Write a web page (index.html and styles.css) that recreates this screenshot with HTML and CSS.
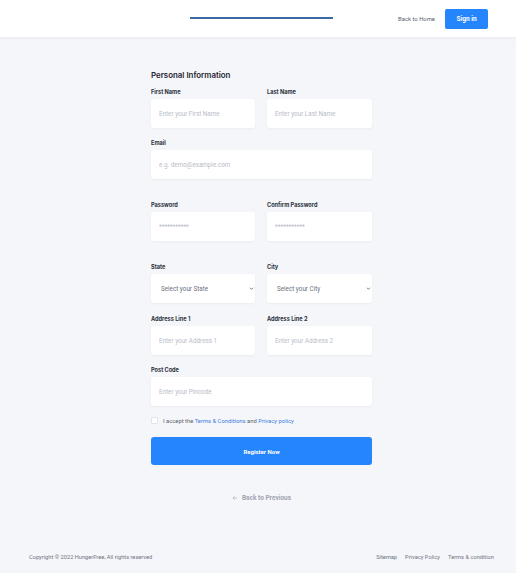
FILE: index.html
```html
<!DOCTYPE html>
<html lang="en">
<head>
<meta charset="utf-8">
<title>Register</title>
<link rel="stylesheet" href="styles.css">
</head>
<body>
<header class="topbar">
  <div class="progress"></div>
  <nav class="topnav">
    <a class="home-link" href="#">Back to Home</a>
    <a class="signin" href="#">Sign in</a>
  </nav>
</header>

<main class="form-wrap">
  <h2 class="title">Personal Information</h2>
  <form class="form">
    <div class="row two">
      <div class="field"><label>First Name</label><input class="input" placeholder="Enter your First Name"></div>
      <div class="field"><label>Last Name</label><input class="input" placeholder="Enter your Last Name"></div>
    </div>
    <div class="row spaced">
      <div class="field"><label>Email</label><input class="input" placeholder="e.g. demo@example.com"></div>
    </div>
    <div class="row two spaced">
      <div class="field"><label>Password</label><input class="input" type="password" placeholder="***********"></div>
      <div class="field"><label>Confirm Password</label><input class="input" type="password" placeholder="***********"></div>
    </div>
    <div class="row two mid">
      <div class="field"><label>State</label>
        <div class="select">Select your State
          <svg class="chev" viewBox="0 0 10 10" width="5" height="5"><path d="M2 3.5 L5 6.5 L8 3.5" fill="none" stroke="#444" stroke-width="1.4"/></svg>
        </div>
      </div>
      <div class="field"><label>City</label>
        <div class="select">Select your City
          <svg class="chev" viewBox="0 0 10 10" width="5" height="5"><path d="M2 3.5 L5 6.5 L8 3.5" fill="none" stroke="#444" stroke-width="1.4"/></svg>
        </div>
      </div>
    </div>
    <div class="row two">
      <div class="field"><label>Address Line 1</label><input class="input" placeholder="Enter your Address 1"></div>
      <div class="field"><label>Address Line 2</label><input class="input" placeholder="Enter your Address 2"></div>
    </div>
    <div class="row">
      <div class="field"><label>Post Code</label><input class="input" placeholder="Enter your Pincode"></div>
    </div>
    <div class="agree">
      <span class="check"></span>
      <span>I accept the <a href="#">Terms &amp; Conditions</a> and <a href="#">Privacy policy</a></span>
    </div>
    <button class="register" type="button">Register Now</button>
  </form>
  <a class="back" href="#">
    <svg viewBox="0 0 10 10" width="6" height="6"><path d="M8.5 5 H1.8 M4.5 2.2 L1.6 5 L4.5 7.8" fill="none" stroke="#a3a8b4" stroke-width="1.1"/></svg>
    Back to Previous
  </a>
</main>

<footer class="footer">
  <span>Copyright © 2022 HungerFree, All rights reserved</span>
  <nav class="footlinks">
    <a href="#">Sitemap</a>
    <a href="#">Privacy Policy</a>
    <a href="#">Terms &amp; condition</a>
  </nav>
</footer>
</body>
</html>
```
FILE: styles.css
```css
* { box-sizing: border-box; }
html, body { margin: 0; padding: 0; }
body {
  background: #f5f6fa;
  font-family: Roboto, "Liberation Sans", sans-serif;
  color: #2a2f3a;
  width: 516px;
  min-height: 573px;
}
a { text-decoration: none; }

.topbar {
  height: 37px;
  background: #fff;
  box-shadow: 0 1px 4px rgba(30, 40, 70, 0.06);
  display: flex;
  align-items: center;
  padding: 0 28px 0 190px;
}
.progress {
  width: 143px;
  height: 2px;
  background: #3a6aa6;
  margin-top: -1px;
}
.topnav {
  margin-left: auto;
  display: flex;
  align-items: center;
  gap: 10px;
}
.home-link {
  font-size: 5.9px;
  color: #5b6170;
}
.signin {
  width: 43px;
  height: 20px;
  background: #2585fc;
  color: #fff;
  font-weight: 700;
  font-size: 6.5px;
  border-radius: 2px;
  display: flex;
  align-items: center;
  justify-content: center;
}

.form-wrap {
  width: 221px;
  margin-left: 151px;
  padding-top: 33px;
}
.title {
  font-family: Inter, Roboto, sans-serif;
  font-size: 7.9px;
  line-height: 10px;
  font-weight: 600;
  margin: 0 0 8px;
  color: #1f2431;
}
.form { display: flex; flex-direction: column; }
.row { margin-bottom: 11px; }
.row.spaced { margin-bottom: 22px; }
.row.mid { margin-bottom: 12px; }
.row.two {
  display: grid;
  grid-template-columns: 104px 105px;
  column-gap: 12px;
}
.field label {
  display: block;
  font-family: Inter, Roboto, sans-serif;
  font-size: 5.6px;
  line-height: 8px;
  font-weight: 700;
  color: #2b303b;
  margin-bottom: 3px;
}
.input, .select {
  display: block;
  width: 100%;
  height: 29px;
  background: #fff;
  border: none;
  border-radius: 3px;
  box-shadow: 0 1px 3px rgba(40, 50, 80, 0.05);
  font-family: Roboto, sans-serif;
  font-size: 6.3px;
  padding: 0 8px;
  outline: none;
}
.input::placeholder { color: #b8bcc7; }
.select {
  display: flex;
  align-items: center;
  justify-content: space-between;
  padding: 0 1px 0 10px;
  color: #6a7080;
}
.chev { display: block; }

.agree {
  display: flex;
  align-items: center;
  gap: 5px;
  font-size: 5.85px;
  color: #5a5f6b;
  margin-top: -1px;
  height: 9px;
}
.agree a { color: #3b7ee0; }
.check {
  width: 7px;
  height: 7px;
  background: #fff;
  border: 0.5px solid #e2e4ea;
  border-radius: 1px;
}
.register {
  margin-top: 12px;
  height: 28px;
  width: 100%;
  background: #2585fc;
  border: none;
  border-radius: 3px;
  color: #fff;
  font-family: Roboto, sans-serif;
  font-size: 6px;
  font-weight: 700;
}
.back {
  margin: 29px auto 0;
  display: flex;
  align-items: center;
  justify-content: center;
  gap: 4px;
  color: #a0a5b1;
  font-size: 6.5px;
  font-weight: 700;
}
.back svg { display: block; }

.footer {
  margin-top: 52px;
  display: flex;
  justify-content: space-between;
  align-items: center;
  padding: 0 22px 0 29px;
  font-size: 5.7px;
  color: #6f7482;
}
.footlinks { display: flex; gap: 8px; }
.footlinks a { color: #6f7482; }
```
